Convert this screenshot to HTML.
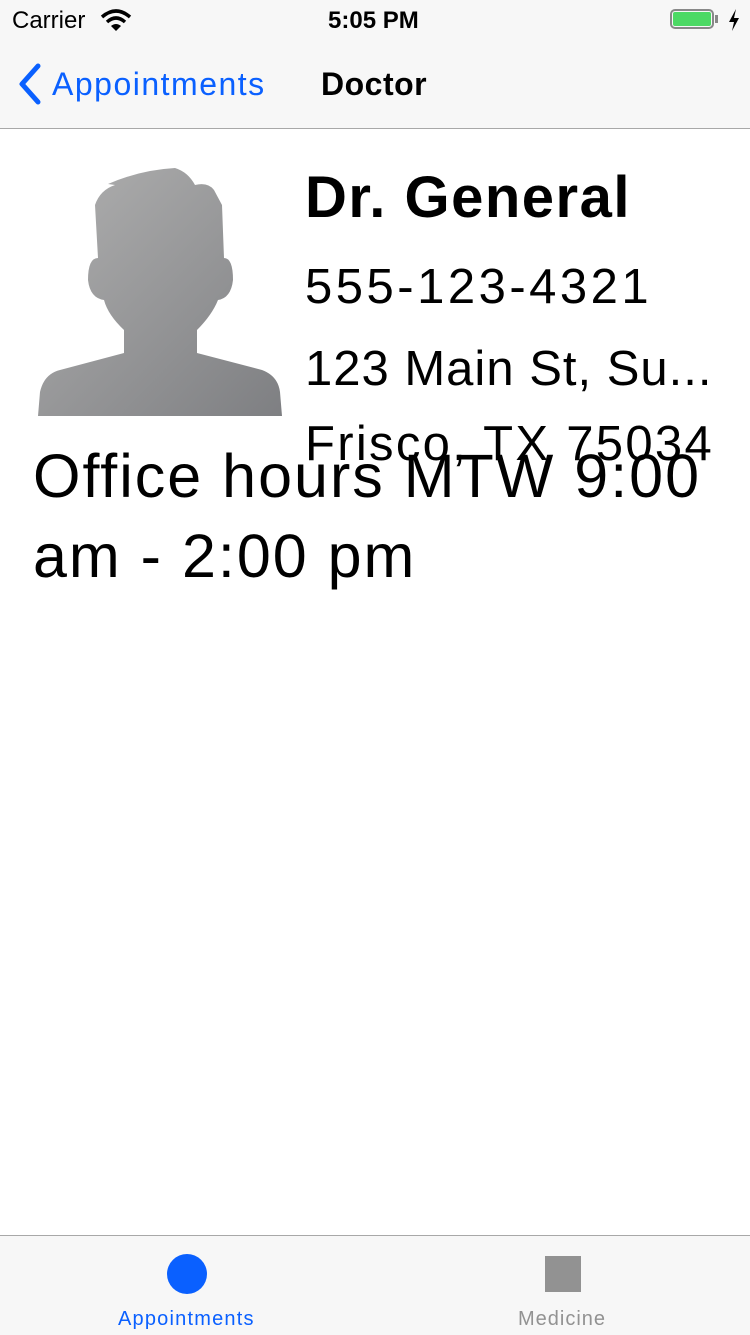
<!DOCTYPE html>
<html><head><meta charset="utf-8"><style>
body{margin:0;width:750px;height:1334px;position:relative;background:#fff;font-family:"Liberation Sans",sans-serif;overflow:hidden}
.a{position:absolute;white-space:nowrap}
</style></head><body>
<div class="a" style="left:0;top:0;width:750px;height:128px;background:#f7f7f7;border-bottom:1px solid #a8a8a8"></div>
<div class="a" style="left:12px;top:7px;font-size:24px;color:#000">Carrier</div>
<svg class="a" style="left:100px;top:8px" width="32" height="24" viewBox="0 0 32 24"><path d="M2 9 Q16 -3 30 9" stroke="#000" stroke-width="3.5" fill="none"/><path d="M7 14 Q16 6 25 14" stroke="#000" stroke-width="3.5" fill="none"/><path d="M11 18 L16 23 L21 18 Q16 14 11 18Z" fill="#000"/></svg>
<div class="a" style="left:328px;top:7px;font-size:24px;font-weight:bold">5:05 PM</div>
<div class="a" style="left:670px;top:9px;width:44px;height:20px;border:2px solid #888;border-radius:5px;box-sizing:border-box"></div>
<div class="a" style="left:673px;top:12px;width:38px;height:14px;background:#4cd964;border-radius:2px"></div>
<div class="a" style="left:715px;top:15px;width:3px;height:8px;background:#888"></div>
<svg class="a" style="left:728px;top:9px" width="12" height="22" viewBox="0 0 12 22"><path d="M8 0 L1 13 H6 L4 22 L11 9 H6Z" fill="#000"/></svg>
<svg class="a" style="left:14px;top:62px" width="30" height="44" viewBox="0 0 30 44"><path d="M24 4 L8 22 L24 40" stroke="#0a60ff" stroke-width="5" fill="none" stroke-linecap="round" stroke-linejoin="round"/></svg>
<div class="a" style="left:52px;top:66px;font-size:32px;color:#0a60ff;letter-spacing:1.5px">Appointments</div>
<div class="a" style="left:321px;top:66px;font-size:32px;font-weight:bold;letter-spacing:0.5px">Doctor</div>
<svg class="a" style="left:0;top:0" width="750" height="420"><defs><linearGradient id="g" x1="0" y1="0" x2="1" y2="1"><stop offset="0" stop-color="#b0b0b0"/><stop offset="1" stop-color="#7e7f82"/></linearGradient></defs>
<path d="M38 416 L40 392 Q44 374 60 370 L124 353 L124 330 Q108 315 104 300 Q90 298 88 280 Q88 258 98 258 L95 205 Q100 190 115 185 L108 184 Q140 170 175 168 Q188 172 195 185 Q208 182 214 190 L222 205 L224 258 Q233 258 233 280 Q231 298 218 300 Q212 315 197 330 L197 353 L262 370 Q278 376 280 392 L282 416 Z" fill="url(#g)"/></svg>
<div class="a" style="left:305px;top:164px;font-size:58px;font-weight:bold;letter-spacing:1.5px">Dr. General</div>
<div class="a" style="left:305px;top:259px;font-size:49px;letter-spacing:3.5px">555-123-4321</div>
<div class="a" style="left:305px;top:341px;font-size:49px;letter-spacing:1px">123 Main St, Su...</div>
<div class="a" style="left:305px;top:416px;font-size:49px;letter-spacing:2.3px">Frisco, TX 75034</div>
<div class="a" style="left:33px;top:436px;font-size:61px;line-height:80px;letter-spacing:2px">Office hours MTW 9:00<br>am - 2:00 pm</div>
<div class="a" style="left:0;top:1235px;width:750px;height:99px;background:#f7f7f7;border-top:1px solid #a8a8a8"></div>
<div class="a" style="left:167px;top:1254px;width:40px;height:40px;border-radius:50%;background:#0a60ff"></div>
<div class="a" style="left:545px;top:1256px;width:36px;height:36px;background:#929292"></div>
<div class="a" style="left:118px;top:1308px;font-size:20px;color:#0a60ff;letter-spacing:1.2px">Appointments</div>
<div class="a" style="left:518px;top:1308px;font-size:20px;color:#929292;letter-spacing:1px">Medicine</div>
</body></html>
